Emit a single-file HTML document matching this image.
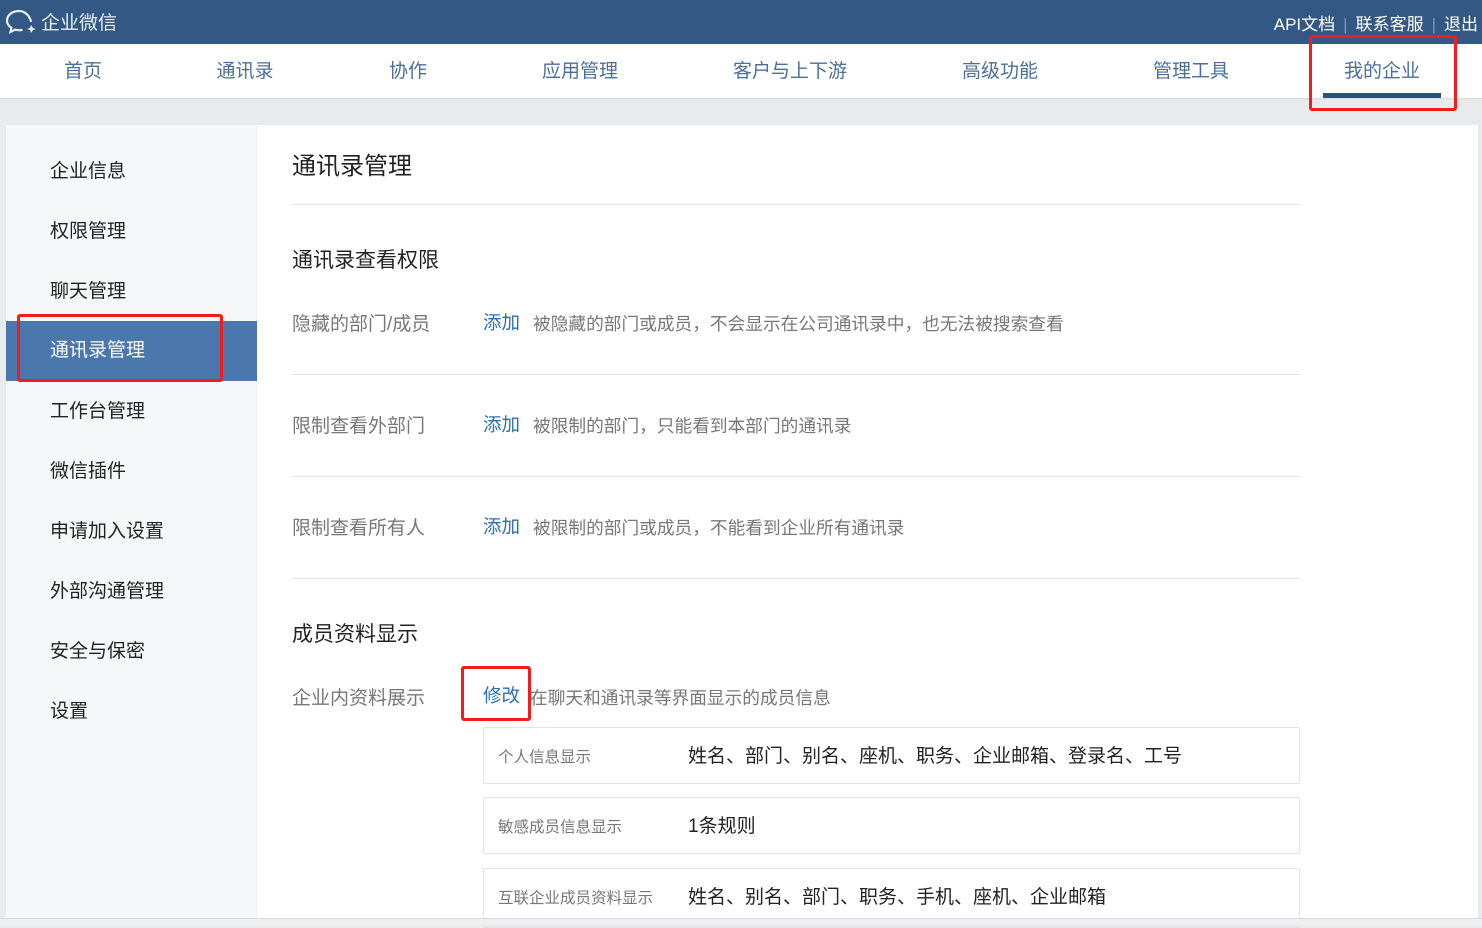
<!DOCTYPE html>
<html><head><meta charset="utf-8"><style>
*{margin:0;padding:0;box-sizing:border-box}
body{width:1482px;height:925px;overflow:hidden;background:#e9eaec;font-family:"Liberation Sans","Noto Sans CJK SC",sans-serif;position:relative}
.top{position:absolute;left:0;top:0;width:1482px;height:44px;background:#345884}
.logo{position:absolute;left:41px;top:8px;color:#e8edf3;font-size:19px}
.links{position:absolute;right:4px;top:10px;color:#fff;font-size:17px}
.links span.s{color:#7f98b5;margin:0 8px}
.nav{position:absolute;left:0;top:44px;width:1482px;height:54px;background:#fff;box-shadow:0 1px 2px rgba(0,0,0,.08)}
.nav div{position:absolute;top:12px;font-size:19px;color:#4b6f9a;transform:translateX(-50%);white-space:nowrap}
.bar{position:absolute;left:1323px;top:93px;width:118px;height:5px;background:#2d5080}
.card{position:absolute;left:6px;top:125px;width:1472px;height:793px;background:#fff}
.side{position:absolute;left:6px;top:125px;width:251px;height:793px;background:#f6f7f9;border-right:1px solid #eceef1}
.side div{position:absolute;left:44px;font-size:19px;color:#222;height:60px;line-height:60px}
.side .act{left:0;width:251px;padding-left:44px;background:#4a77ac;color:#fff}
.red{position:absolute;border:3px solid #f21c1c;border-radius:3px}
.t{position:absolute;white-space:nowrap}
.hr{position:absolute;left:292px;width:1008px;height:1px;background:#e4e6e9}
.lab{font-size:19px;color:#777}
.add{font-size:18.5px;color:#2c6fb3}
.desc{font-size:17.7px;color:#777}
.box{position:absolute;left:483px;width:817px;height:57px;border:1px solid #e1e3e6;border-radius:2px}
.box .k{position:absolute;left:14px;top:17px;font-size:15.5px;color:#777}
.box .v{position:absolute;left:204px;top:13px;font-size:19px;color:#222}
.foot{position:absolute;left:0;top:918px;width:1482px;height:7px;background:#eeeff1;border-top:1px solid #d9dbde}
</style></head><body>
<div class="top">
<svg style="position:absolute;left:5px;top:8px" width="34" height="28" viewBox="0 0 34 28"><path d="M14 3C7 3 2 7.5 2 12.5c0 3 1.7 5.5 4.3 7.2L5.5 24l4.5-2.3c1.3.3 2.6.5 4 .5 1.2 0 2.4-.1 3.5-.4" fill="none" stroke="#e8edf3" stroke-width="2.2"/><path d="M26 14C25 8 20 3 14 3" fill="none" stroke="#e8edf3" stroke-width="2.2"/><path d="M26 17l2 3 3 1-3 1-2 3-1-3-3-1 3-1z" fill="#e8edf3"/></svg>
<div class="logo">企业微信</div>
<div class="links">API文档<span class="s">|</span>联系客服<span class="s">|</span>退出</div>
</div>
<div class="nav">
<div style="left:83px">首页</div><div style="left:245px">通讯录</div><div style="left:408px">协作</div><div style="left:580px">应用管理</div><div style="left:790px">客户与上下游</div><div style="left:1000px">高级功能</div><div style="left:1191px">管理工具</div><div style="left:1382px">我的企业</div>
</div>
<div class="bar"></div>
<div class="red" style="left:1309px;top:35px;width:148px;height:76px"></div>
<div class="card"></div>
<div class="side">
<div style="top:17px">企业信息</div>
<div style="top:77px">权限管理</div>
<div style="top:137px">聊天管理</div>
<div class="act" style="top:196px">通讯录管理</div>
<div style="top:257px">工作台管理</div>
<div style="top:317px">微信插件</div>
<div style="top:377px">申请加入设置</div>
<div style="top:437px">外部沟通管理</div>
<div style="top:497px">安全与保密</div>
<div style="top:557px">设置</div>
</div>
<div class="red" style="left:17px;top:314px;width:206px;height:68px"></div>
<div class="t" style="left:292px;top:146px;font-size:24px;color:#222">通讯录管理</div>
<div class="hr" style="top:204px"></div>
<div class="t" style="left:292px;top:244px;font-size:21px;color:#222">通讯录查看权限</div>
<div class="t lab" style="left:292px;top:309px">隐藏的部门/成员</div>
<div class="t add" style="left:483px;top:309px">添加</div>
<div class="t desc" style="left:533px;top:310px">被隐藏的部门或成员，不会显示在公司通讯录中，也无法被搜索查看</div>
<div class="hr" style="top:374px"></div>
<div class="t lab" style="left:292px;top:411px">限制查看外部门</div>
<div class="t add" style="left:483px;top:411px">添加</div>
<div class="t desc" style="left:533px;top:412px">被限制的部门，只能看到本部门的通讯录</div>
<div class="hr" style="top:476px"></div>
<div class="t lab" style="left:292px;top:513px">限制查看所有人</div>
<div class="t add" style="left:483px;top:513px">添加</div>
<div class="t desc" style="left:533px;top:514px">被限制的部门或成员，不能看到企业所有通讯录</div>
<div class="hr" style="top:578px"></div>
<div class="t" style="left:292px;top:618px;font-size:21px;color:#222">成员资料显示</div>
<div class="t lab" style="left:292px;top:683px">企业内资料展示</div>
<div class="t add" style="left:483px;top:682px">修改</div>
<div class="t desc" style="left:530px;top:684px">在聊天和通讯录等界面显示的成员信息</div>
<div class="red" style="left:461px;top:666px;width:70px;height:55px"></div>
<div class="box" style="top:727px"><span class="k">个人信息显示</span><span class="v">姓名、部门、别名、座机、职务、企业邮箱、登录名、工号</span></div>
<div class="box" style="top:797px"><span class="k">敏感成员信息显示</span><span class="v">1条规则</span></div>
<div class="box" style="top:868px;height:60px"><span class="k">互联企业成员资料显示</span><span class="v">姓名、别名、部门、职务、手机、座机、企业邮箱</span></div>
<div class="foot"></div>
</body></html>
